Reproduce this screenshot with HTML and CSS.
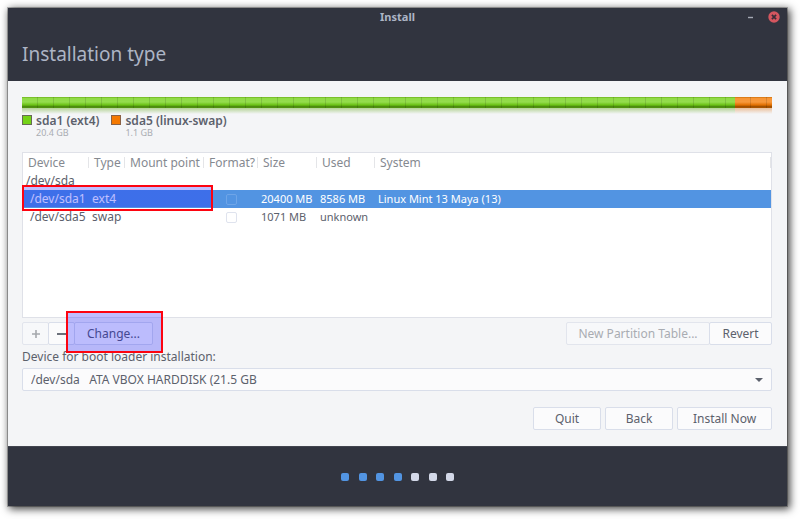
FILE: index.html
```html
<!DOCTYPE html>
<html lang="en">
<head>
<meta charset="utf-8">
<title>Install</title>
<link rel="stylesheet" href="styles.css">
</head>
<body>
<main class="window">
  <header class="head">
    <div class="titlebar">
      <span class="title">Install</span>
      <div class="controls">
        <button class="control" type="button" aria-label="Minimize"><svg width="5" height="11" viewBox="0 0 5 11"><path d="M0 5.5h5" stroke="#a4a9b4" stroke-width="1.4"/></svg></button>
        <button class="control" type="button" aria-label="Close"><svg width="12" height="12" viewBox="0 0 12 12"><circle cx="6" cy="6" r="5.7" fill="#d4565f"/><path d="M3.9 3.9l4.2 4.2M8.1 3.9L3.9 8.1" stroke="#3a2d38" stroke-width="1.7"/></svg></button>
      </div>
    </div>
    <h1>Installation type</h1>
  </header>

  <div class="content">
    <div class="disk"><div class="part ext4"></div><div class="part swap"></div></div>
    <div class="legend">
      <div class="entry"><span class="swatch green"></span><div><strong>sda1 (ext4)</strong><small>20.4 GB</small></div></div>
      <div class="entry"><span class="swatch orange"></span><div><strong>sda5 (linux-swap)</strong><small>1.1 GB</small></div></div>
    </div>

    <div class="list">
      <table>
        <colgroup><col class="c-device"><col class="c-type"><col class="c-mount"><col class="c-format"><col class="c-size"><col class="c-used"><col></colgroup>
        <thead>
          <tr><th>Device</th><th>Type</th><th>Mount point</th><th>Format?</th><th>Size</th><th>Used</th><th>System</th></tr>
        </thead>
        <tbody>
          <tr><td class="root" colspan="7">/dev/sda</td></tr>
          <tr class="selected"><td class="child">/dev/sda1</td><td class="type">ext4</td><td></td><td class="check"><input type="checkbox" aria-label="Format /dev/sda1"></td><td>20400 MB</td><td>8586 MB</td><td>Linux Mint 13 Maya (13)</td></tr>
          <tr><td class="child">/dev/sda5</td><td class="type">swap</td><td></td><td class="check"><input type="checkbox" aria-label="Format /dev/sda5"></td><td>1071 MB</td><td>unknown</td><td></td></tr>
        </tbody>
      </table>
      <div class="mark mark-row"></div>
    </div>

    <div class="tools">
      <div class="group">
        <button class="btn icon" type="button" aria-label="Add" disabled><svg width="10" height="10" viewBox="0 0 10 10"><path d="M1 5h8M5 1v8" stroke="#a5a8ad" stroke-width="1.6"/></svg></button>
        <button class="btn icon" type="button" aria-label="Remove"><svg width="10" height="10" viewBox="0 0 10 10"><path d="M0 5h10" stroke="#5c616c" stroke-width="1.8"/></svg></button>
        <button class="btn change" type="button">Change...</button>
        <div class="mark mark-change"></div>
      </div>
      <div class="group">
        <button class="btn table-btn" type="button" disabled>New Partition Table...</button>
        <button class="btn revert" type="button">Revert</button>
      </div>
    </div>

    <label class="boot-label" for="boot">Device for boot loader installation:</label>
    <div class="combo">
      <select id="boot"><option>/dev/sda &nbsp; ATA VBOX HARDDISK (21.5 GB</option></select>
      <svg class="arrow" width="8" height="4" viewBox="0 0 8 4"><path d="M0 0h8L4 4z" fill="#5c616c"/></svg>
    </div>

    <div class="actions">
      <button class="btn nav" type="button">Quit</button>
      <button class="btn nav" type="button">Back</button>
      <button class="btn install" type="button">Install Now</button>
    </div>
  </div>

  <footer class="foot">
    <div class="dots"><i class="done"></i><i class="done"></i><i class="done"></i><i class="done"></i><i></i><i></i><i></i></div>
  </footer>
</main>
</body>
</html>
```

FILE: styles.css
```css
* { box-sizing: border-box; }

body {
  margin: 0;
  padding: 8px 13px 13px 8px;
  background: #fff;
  color: #5c616c;
  font: 12px/18px "Noto Sans", "Open Sans", sans-serif;
}

.window {
  background: #f4f5f7;
  box-shadow: 0 0 0 1px rgba(0, 0, 0, .25), 2px 2px 8px 1px rgba(0, 0, 0, .75);
}

.head {
  height: 73px;
  background: #31343f;
  color: #adb5c5;
}

.titlebar {
  display: grid;
  grid-template-columns: 1fr auto 1fr;
  height: 18px;
}

.title {
  grid-column: 2;
  font-size: 11px;
  font-weight: 700;
}

.controls {
  display: flex;
  justify-content: flex-end;
  align-items: center;
  gap: 15px;
  padding-right: 7px;
}

.control {
  display: flex;
  padding: 0;
  border: 0;
  background: none;
}

h1 {
  margin: 0;
  padding: 16px 14px 0;
  font-size: 19px;
  line-height: 24px;
  font-weight: 400;
}

.content {
  padding: 16px 15px 16px 14px;
}

.disk {
  display: flex;
  height: 11px;
}

.part {
  position: relative;
  background-image:
    repeating-linear-gradient(90deg, transparent 0 15px, rgba(0, 0, 0, .12) 15px 16px),
    linear-gradient(rgba(70, 60, 0, .3) 0, rgba(255, 255, 255, .2) 1px, rgba(255, 255, 255, .24) 5px, rgba(0, 0, 0, .08) 8px, rgba(0, 0, 0, .42) 10px, rgba(0, 0, 0, .2) 11px);
}

.part::after {
  content: "";
  position: absolute;
  inset: 100% 0 auto;
  height: 6px;
  background: linear-gradient(currentColor, transparent);
  opacity: .5;
}

.ext4 { flex: 95; background-color: #73d216; color: #73b034; }
.swap { flex: 5; background-color: #f57900; color: #e08a40; }

.legend {
  display: flex;
  gap: 12px;
  margin-top: 7px;
}

.entry {
  display: flex;
  gap: 4px;
}

.swatch {
  width: 10px;
  height: 10px;
  border: 1px solid #666b55;
}

.green { background: #73d216; }
.orange { background: #f57900; border-color: #8a6245; }

.legend strong,
.legend small {
  display: block;
  line-height: 12px;
}

.legend strong {
  font-size: 12px;
  font-weight: 600;
}

.legend small {
  color: #a9acb2;
  font-size: 9px;
  line-height: 11px;
}

.list {
  position: relative;
  height: 166px;
  margin-top: 14px;
  border: 1px solid #dfe1e8;
  background: #fff;
}

table {
  width: 100%;
  table-layout: fixed;
  border-collapse: collapse;
}

.c-device { width: 66px; }
.c-type { width: 36px; }
.c-mount { width: 79px; }
.c-format { width: 54px; }
.c-size { width: 59px; }
.c-used { width: 58px; }

th, td {
  height: 18px;
  padding: 0 0 0 3px;
  font-size: 11px;
  line-height: 18px;
  text-align: left;
  white-space: nowrap;
}

th {
  height: 19px;
  padding-left: 5px;
  color: #858990;
  font-size: 12px;
  font-weight: 400;
  background: linear-gradient(#e4e5e8, #e4e5e8) right 4px / 1px 11px no-repeat;
}

td.child { padding-left: 7px; }
td.check { padding: 0; text-align: center; }

.root, .child, .type { font-size: 12px; }

.selected {
  background: #5294e2;
  color: #fff;
}

input {
  appearance: none;
  display: block;
  width: 11px;
  height: 11px;
  margin: 0 auto;
  border: 1px solid #dfe3ee;
  border-radius: 2px;
  background: #fff;
}

.selected input {
  border-color: #6ea5e8;
  background: transparent;
}

.mark {
  position: absolute;
  border: 2px solid #fd0410;
  background: rgba(0, 0, 255, .25);
  pointer-events: none;
}

.mark-row {
  top: 32px;
  left: -1px;
  width: 191px;
  height: 26px;
  background: linear-gradient(rgba(0, 0, 255, .25) 0 20px, transparent 20px);
}

.tools {
  display: flex;
  justify-content: space-between;
  margin-top: 4px;
}

.group {
  position: relative;
  display: flex;
}

.mark-change {
  top: -11px;
  left: 44px;
  width: 97px;
  height: 42px;
}

.btn {
  display: flex;
  align-items: center;
  justify-content: center;
  height: 23px;
  padding: 0;
  border: 1px solid #d9deea;
  border-radius: 2px;
  background: #fbfbfc;
  color: inherit;
  font: inherit;
}

.btn:disabled {
  border-color: #e2e5ed;
  background: #f7f8fa;
  color: #a9acb2;
}

.group .btn + .btn { margin-left: -1px; }

.icon { width: 27px; }
.change { width: 79px; }
.table-btn { width: 144px; }
.revert { width: 63px; }
.nav { width: 68px; }
.install { width: 95px; }

.boot-label {
  display: block;
  margin-top: 3px;
  line-height: 18px;
}

.combo {
  position: relative;
  margin-top: 2px;
}

select {
  appearance: none;
  display: block;
  width: 100%;
  height: 23px;
  padding: 0 24px 0 8px;
  border: 1px solid #d9deea;
  border-radius: 2px;
  background: #fbfbfc;
  color: inherit;
  font: inherit;
}

.arrow {
  position: absolute;
  top: 10px;
  right: 9px;
}

.actions {
  display: flex;
  justify-content: flex-end;
  gap: 4px;
  margin-top: 16px;
}

.foot {
  display: flex;
  align-items: center;
  justify-content: center;
  height: 60px;
  border-top: 1px solid #42454f;
  background: #31343f;
}

.dots {
  display: flex;
  justify-content: space-between;
  width: 113px;
}

.dots i {
  width: 8px;
  height: 8px;
  border-radius: 2px;
  background: #d3d8e8;
}

.dots .done { background: #5294e2; }
```
